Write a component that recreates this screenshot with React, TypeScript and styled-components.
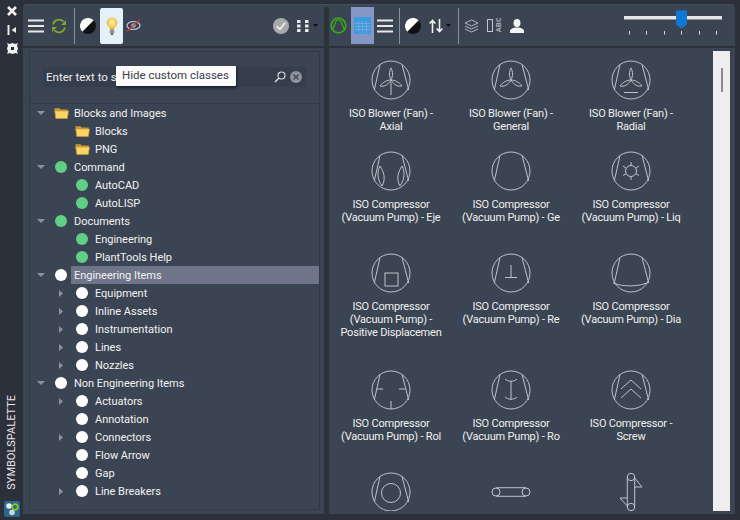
import React from 'react';
import styled, { createGlobalStyle } from 'styled-components';

const Global = createGlobalStyle`
  html, body { margin: 0; padding: 0; background: #2b303a; }
  body { font-family: Roboto, "Open Sans", sans-serif; font-size: 11px; color: #f0f0f0; }
  * { box-sizing: border-box; }
`;

const Page = styled.div`
  width: 740px; height: 520px; display: flex; background: #2b303a; overflow: hidden; position: relative;
`;
const Strip = styled.div`
  width: 23px; height: 100%; flex: none; display: flex; flex-direction: column; align-items: center; padding: 5px 0 3px 1px;
`;
const StripIcons = styled.div`
  display: flex; flex-direction: column; align-items: center; gap: 7px;
`;
const StripTitle = styled.div`
  margin-top: auto; margin-bottom: 11px; writing-mode: vertical-rl; transform: rotate(180deg);
  font-size: 11px; line-height: 14px; color: #e8e8e8;
`;
const Main = styled.div`
  flex: 1; margin: 4px 5px 6px 0; display: flex; background: #3b4452; border-radius: 4px 4px 0 0;
  border-top: 1px solid #454e5d; min-width: 0; overflow: hidden;
`;
const LeftPane = styled.div`
  width: 301px; flex: none; display: flex; flex-direction: column;
`;
const Splitter = styled.div`
  width: 5px; flex: none; background: #2d3138; margin-top: 2px;
`;
const RightPane = styled.div`
  flex: 1; min-width: 0; display: flex; flex-direction: column;
`;
const Toolbar = styled.div`
  height: 43px; flex: none; display: flex; align-items: center; position: relative; border-bottom: 2px solid #2d3138;
`;
const Tool = styled.div<{ $w?: number; $l?: number }>`
  width: ${p => p.$w ?? 16}px; height: 100%; margin-left: ${p => p.$l ?? 0}px; flex: none;
  display: flex; align-items: center; justify-content: center;
`;
const ToolActive = styled.div`
  width: 23px; height: 36px; margin-left: 4px; flex: none; background: #e4f1fb; border-radius: 2px;
  display: flex; align-items: center; justify-content: center;
`;
const ToolSelected = styled.div`
  width: 23px; height: 37px; margin-left: 4px; margin-top: 2px; flex: none; align-self: flex-start; background: #8595c4;
  display: flex; align-items: center; justify-content: center;
`;
const Sep = styled.div<{ $l?: number }>`
  width: 1px; height: 36px; margin-left: ${p => p.$l ?? 0}px; background: #8a919c; flex: none;
`;
const Spacer = styled.div`flex: 1;`;

const TreePanel = styled.div`
  flex: 1; margin: 3px 4px 4px 6px; border: 1px solid #333a47; display: flex; flex-direction: column; min-height: 0; overflow: hidden;
`;
const SearchArea = styled.div`
  height: 52px; flex: none; border-bottom: 1px solid #333a47; padding: 15px 13px 0 13px;
`;
const SearchBox = styled.div`
  height: 20px; background: #353e4c; display: flex; align-items: center; padding: 0 4px 0 3px; gap: 4px;
  color: #f0f0f0; font-size: 11.5px;
`;
const SearchText = styled.span`flex: 1;`;
const Tree = styled.div`display: flex; flex-direction: column;`;
const Row = styled.div`
  height: 18px; display: flex; align-items: center; flex: none; position: relative;
`;
const Indent = styled.div<{ $level: number }>`
  width: ${p => (p.$level ? 26 : 6)}px; flex: none;
`;
const Arrow = styled.div<{ $level: number }>`
  width: 10px; height: 10px; margin-right: ${p => (p.$level ? 8 : 7)}px; flex: none; display: flex; align-items: center; justify-content: center;
`;
const NodeIcon = styled.div`
  width: 16px; height: 18px; flex: none; display: flex; align-items: center; justify-content: center; margin-right: 5px;
`;
const Dot = styled.div<{ $green?: boolean }>`
  width: 12px; height: 12px; border-radius: 50%; background: ${p => (p.$green ? '#5fd085' : '#ffffff')};
`;
const Label = styled.div<{ $sel?: boolean }>`
  flex: ${p => (p.$sel ? 1 : 'none')}; height: 18px; line-height: 20px; white-space: nowrap; color: #f2f2f2;
  letter-spacing: -0.03px;
  background: ${p => (p.$sel ? '#6f7489' : 'transparent')}; margin-left: -3px; padding-left: 3px;
`;
const Tooltip = styled.div`
  position: absolute; left: 116px; top: 66px; width: 120px; height: 20px; background: #fbfbfb; color: #3a3f47;
  font-size: 11.5px; line-height: 19px; padding-left: 6px; box-shadow: 1px 2px 3px rgba(0,0,0,.55); border-radius: 1px; white-space: nowrap;
`;

const Content = styled.div`
  flex: 1; min-height: 0; display: flex; overflow: hidden; padding: 3px 5px 3px 0;
`;
const Grid = styled.div`
  flex: 1; min-width: 0; display: grid; grid-template-columns: repeat(3, 120px); grid-template-rows: 91px 102px 117px 102px 60px;
  padding-left: 2px; align-content: start; overflow: hidden; padding-top: 9px;
`;
const Cell = styled.div`
  display: flex; flex-direction: column; align-items: center; min-width: 0;
`;
const Caption = styled.div`
  margin-top: 7px; width: 116px; text-align: center; color: #f0f0f0; line-height: 13px; font-size: 11px; letter-spacing: -0.2px;
`;
const Line = styled.div`white-space: nowrap;`;
const Scroll = styled.div`
  width: 17px; flex: none; background: #eeeeee; display: flex; justify-content: center; padding-top: 17px;
`;
const Thumb = styled.div`
  width: 2px; height: 24px; background: #8a8a8a;
`;
const SliderWrap = styled.div`
  width: 100px; height: 30px; margin-right: 11px; margin-top: -2px; flex: none; position: relative;
`;

const ST = '#bfc3ca';

const Hamburger = () => (
  <svg width="16" height="14" viewBox="0 0 16 14"><path d="M0 1.500h16M0 7h16M0 12.500h16" stroke="#e8e8e8" strokeWidth="2" /></svg>
);
const Contrast = () => (
  <svg width="16" height="16" viewBox="0 0 16 16">
    <circle cx="8" cy="8" r="8" fill="#101215" />
    <path d="M2.300 13.700A8 8 0 0 1 13.700 2.300Z" fill="#fff" />
  </svg>
);
const Sync = () => (
  <svg width="16" height="16" viewBox="0 0 16 16" fill="none">
    <path d="M2 6.500A6.300 6.300 0 0 1 12.500 3.500" stroke="#7aa72e" strokeWidth="1.800" />
    <path d="M14 9.500A6.300 6.300 0 0 1 3.500 12.500" stroke="#7aa72e" strokeWidth="1.800" />
    <path d="M15 2v5h-5zM1 14V9h5z" fill="#7aa72e" />
  </svg>
);
const Bulb = () => (
  <svg width="12" height="18" viewBox="0 0 12 18">
    <defs><radialGradient id="bg" cx=".5" cy=".4" r=".6"><stop offset="0" stopColor="#fff6b0" /><stop offset="1" stopColor="#f0b020" /></radialGradient></defs>
    <path d="M6 .5a5.300 5.300 0 0 0-3 9.700c.7.6.8 1.300.8 2.300h4.400c0-1 .1-1.700.8-2.300A5.300 5.300 0 0 0 6 .5Z" fill="url(#bg)" />
    <rect x="3.800" y="12.500" width="4.400" height="4" fill="#8c8c88" />
    <rect x="4.800" y="16.500" width="2.400" height="1.500" fill="#5e5e5c" />
  </svg>
);
const EyeOff = () => (
  <svg width="15" height="13" viewBox="0 0 15 13" fill="none">
    <ellipse cx="7.500" cy="6.500" rx="6.500" ry="4" stroke="#c5ccd8" strokeWidth="1.200" />
    <circle cx="7.500" cy="6.500" r="2.300" fill="#a6b1c4" />
    <path d="M1 12.500 14 .5" stroke="#d0342c" strokeWidth="1.200" />
  </svg>
);
const CheckCircle = () => (
  <svg width="16" height="16" viewBox="0 0 16 16" fill="none">
    <circle cx="8" cy="8" r="8" fill="#a9a9a9" />
    <path d="M3.800 8.300 7 11.300 12.200 4.800" stroke="#eee" strokeWidth="1.800" />
  </svg>
);
const Dots = () => (
  <svg width="12" height="12" viewBox="0 0 12 12" fill="#eaeaea">
    {[0, 4.500, 9].map(y => [0, 8].map(x => <rect key={`${x}-${y}`} x={x} y={y} width="3.500" height="3" />))}
  </svg>
);
const Caret = () => (
  <svg width="5" height="3" viewBox="0 0 5 3"><path d="M0 0h5L2.500 3z" fill="#0e0f12" /></svg>
);
const GreenRing = () => (
  <svg width="17" height="17" viewBox="0 0 17 17" fill="none">
    <circle cx="8.500" cy="8.500" r="7.300" stroke="#3aa51c" strokeWidth="1.800" />
    <path d="M2.500 12.500 6.500 3.500C7.800 2.600 9.200 2.600 10.500 3.500L14.500 12.500" stroke="#3aa51c" strokeWidth="1.300" />
  </svg>
);
const TableIcon = () => (
  <svg width="17" height="17" viewBox="0 0 17 17">
    <rect width="17" height="17" fill="#3c9ade" />
    <path d="M1 6.500h15M1 9.500h15M1 12.500h15M4.700 4v12M8.500 4v12M12.300 4v12" stroke="#7daad8" strokeWidth=".8" />
  </svg>
);
const Sort = () => (
  <svg width="14" height="14" viewBox="0 0 14 14" fill="none" stroke="#f2f2f2" strokeWidth="1.600">
    <path d="M3.500 14V1.500M.6 4.500l2.900-3 2.900 3M10.500 0v12.500M7.600 9.500l2.900 3 2.900-3" />
  </svg>
);
const Layers = () => (
  <svg width="15" height="14" viewBox="0 0 15 14" fill="none" stroke="#aeb4bd" strokeWidth="1">
    <path d="M7.500 1 14 4 7.500 7 1 4ZM1 7l6.500 3L14 7M1 10l6.500 3L14 10" />
  </svg>
);
const Abc = () => (
  <svg width="15" height="15" viewBox="0 0 15 15" fill="none">
    <rect x=".5" y="1.500" width="5" height="12" stroke="#c3c7cd" strokeWidth="1" />
    <text transform="translate(14 14.500) rotate(-90)" fontFamily="Roboto, sans-serif" fontSize="8" fontWeight="700" fill="#a6acb5">ABC</text>
  </svg>
);
const User = () => (
  <svg width="14" height="14" viewBox="0 0 14 14" fill="#f4f4f4">
    <ellipse cx="7" cy="4" rx="3.500" ry="4" />
    <path d="M0 14v-2c0-2 3-3 5-3.500h4c2 .5 5 1.500 5 3.500v2z" />
  </svg>
);
const Folder = () => (
  <svg width="15" height="12" viewBox="0 0 15 12">
    <path d="M.5 1.200h5l1.200 1.300h7V5H.5z" fill="#c79a32" />
    <path d="M.8 4h13.700l-1.200 7.500H1.800z" fill="#fbd466" stroke="#c79a32" strokeWidth=".7" />
  </svg>
);
const DownArrow = () => (
  <svg width="8" height="4" viewBox="0 0 8 4"><path d="M0 0h8L4 4z" fill="#8d929b" /></svg>
);
const RightArrow = () => (
  <svg width="4" height="7" viewBox="0 0 4 7"><path d="M0 0l4 3.500L0 7z" fill="#8d929b" /></svg>
);

const Outline: React.FC<{ children?: React.ReactNode }> = ({ children }) => (
  <svg width="40" height="40" viewBox="-20 -20 40 40" fill="none" stroke={ST} strokeWidth="1">
    <circle r="19" />
    <path d="M-11-15.500-16.700 10M11-15.500 17.700 10" />
    {children}
  </svg>
);
const Blades = () => (
  <g>
    <path d="M0 0C-2-4-2-8 0-12 2-8 2-4 0 0Z" />
    <path d="M0 0C-4 0-8 2-11 6-7 7-3 5 0 0Z" />
    <path d="M0 0C4 0 8 2 11 6 7 7 3 5 0 0Z" />
  </g>
);

type Sym = { icon: React.ReactNode; lines: string[] };
const VP = '(Vacuum Pump) -';
const symbols: Sym[] = [
  { icon: <Outline><Blades /><path d="M0 2V15" /></Outline>, lines: ['ISO Blower (Fan) -', 'Axial'] },
  { icon: <Outline><Blades /></Outline>, lines: ['ISO Blower (Fan) -', 'General'] },
  { icon: <Outline><Blades /><path d="M-7 12.500H7" /></Outline>, lines: ['ISO Blower (Fan) -', 'Radial'] },
  { icon: <Outline><path d="M-11-5C-14 1-14 8-9 15-5 8-7 1-11-5ZM11-5C14 1 14 8 9 15 5 8 7 1 11-5Z" /></Outline>, lines: ['ISO Compressor', `${VP} Eje`] },
  { icon: <Outline />, lines: ['ISO Compressor', `${VP} Ge`] },
  { icon: <Outline><circle r="5.500" /><path d="M0-5.500V-9M4.800-2.800 8-5M4.800 2.800 8 4.500M0 5.500V9M-4.800 2.800-8 4.500M-4.800-2.800-8-5" /></Outline>, lines: ['ISO Compressor', `${VP} Liq`] },
  { icon: <Outline><rect x="-6" y="0" width="13" height="13" /></Outline>, lines: ['ISO Compressor', VP, 'Positive Displacemen'] },
  { icon: <Outline><path d="M0-8V4M-6 4.500H6" /></Outline>, lines: ['ISO Compressor', `${VP} Re`] },
  { icon: <Outline><path d="M-18 10C-8 14 8 14 18 9" /></Outline>, lines: ['ISO Compressor', `${VP} Dia`] },
  { icon: <Outline><path d="M-14-1H-8M14-1H8M0 11V19" /></Outline>, lines: ['ISO Compressor', `${VP} Rol`] },
  { icon: <Outline><path d="M-6-11C-3-8 3-8 6-11M-6 7C-3 10 3 10 6 7M0-9V9" /></Outline>, lines: ['ISO Compressor', `${VP} Ro`] },
  { icon: <Outline><path d="M-10-1 0-10 10-1M-10 8 0-1 10 8" /></Outline>, lines: ['ISO Compressor -', 'Screw'] },
  { icon: <Outline><circle cy="1" r="9.500" /></Outline>, lines: [] },
  {
    icon: (
      <svg width="40" height="40" viewBox="-20 -20 40 40" fill="none" stroke={ST} strokeWidth="1">
        <circle cx="-15" cy="0" r="4" /><circle cx="15" cy="0" r="4" />
        <path d="M-15-4.300H15M-15 4.300H15" />
      </svg>
    ),
    lines: [],
  },
  {
    icon: (
      <svg width="40" height="40" viewBox="-20 -20 40 40" fill="none" stroke={ST} strokeWidth="1">
        <circle cx="0" cy="-15" r="3.700" /><circle cx="0" cy="15" r="3.700" />
        <path d="M-3.700-15V15M3.700-15V15M3.700-14 11-5H3.700M-3.700 14-11 6H-3.700" />
      </svg>
    ),
    lines: [],
  },
];

type Node = { t: string; level: 0 | 1; exp?: 'down' | 'right'; icon: 'folder' | 'green' | 'white'; sel?: boolean };
const nodes: Node[] = [
  { t: 'Blocks and Images', level: 0, exp: 'down', icon: 'folder' },
  { t: 'Blocks', level: 1, icon: 'folder' },
  { t: 'PNG', level: 1, icon: 'folder' },
  { t: 'Command', level: 0, exp: 'down', icon: 'green' },
  { t: 'AutoCAD', level: 1, icon: 'green' },
  { t: 'AutoLISP', level: 1, icon: 'green' },
  { t: 'Documents', level: 0, exp: 'down', icon: 'green' },
  { t: 'Engineering', level: 1, icon: 'green' },
  { t: 'PlantTools Help', level: 1, icon: 'green' },
  { t: 'Engineering Items', level: 0, exp: 'down', icon: 'white', sel: true },
  { t: 'Equipment', level: 1, exp: 'right', icon: 'white' },
  { t: 'Inline Assets', level: 1, exp: 'right', icon: 'white' },
  { t: 'Instrumentation', level: 1, exp: 'right', icon: 'white' },
  { t: 'Lines', level: 1, exp: 'right', icon: 'white' },
  { t: 'Nozzles', level: 1, exp: 'right', icon: 'white' },
  { t: 'Non Engineering Items', level: 0, exp: 'down', icon: 'white' },
  { t: 'Actuators', level: 1, exp: 'right', icon: 'white' },
  { t: 'Annotation', level: 1, icon: 'white' },
  { t: 'Connectors', level: 1, exp: 'right', icon: 'white' },
  { t: 'Flow Arrow', level: 1, icon: 'white' },
  { t: 'Gap', level: 1, icon: 'white' },
  { t: 'Line Breakers', level: 1, exp: 'right', icon: 'white' },
];

const ticks = [5, 22, 40, 57, 75, 92];

export default function App() {
  return (
    <Page>
      <Global />
      <Strip>
        <StripIcons>
          <svg width="12" height="12" viewBox="0 0 12 12"><path d="M2 2l8 8M10 2l-8 8" stroke="#f0f0f0" strokeWidth="2.600" /></svg>
          <svg width="10" height="12" viewBox="0 0 10 12"><path d="M1.500 1v10" stroke="#e8e8e8" strokeWidth="2" /><path d="M9 3v6L4.500 6z" fill="#e8e8e8" /></svg>
          <svg width="11" height="11" viewBox="0 0 11 11">
            <path d="M0 0l2.500 1L5.500 0l3 1L11 0l-1 2.500L11 5.500l-1 3L11 11l-2.500-1-3 1-3-1L0 11l1-2.500L0 5.500l1-3z" fill="#f0f0f0" />
            <rect x="4" y="4" width="3" height="3" fill="#2b303a" />
          </svg>
        </StripIcons>
        <StripTitle>SYMBOLSPALETTE</StripTitle>
        <svg width="16" height="16" viewBox="0 0 16 16">
          <rect width="16" height="16" rx="2" fill="#28688f" />
          <circle cx="5" cy="5" r="2.800" fill="#e8eef2" />
          <circle cx="11" cy="6" r="2.800" fill="none" stroke="#8fc31f" strokeWidth="1.800" />
          <circle cx="8" cy="11.500" r="2.800" fill="#c9d6de" />
        </svg>
      </Strip>
      <Main>
        <LeftPane>
          <Toolbar>
            <Tool $w={16} $l={5}><Hamburger /></Tool>
            <Tool $w={16} $l={7}><Sync /></Tool>
            <Sep $l={7} />
            <Tool $w={16} $l={5}><Contrast /></Tool>
            <ToolActive><Bulb /></ToolActive>
            <Tool $w={15} $l={3}><EyeOff /></Tool>
            <Spacer />
            <Tool $w={16}><CheckCircle /></Tool>
            <Tool $w={12} $l={8}><Dots /></Tool>
            <Tool $w={5} $l={4}><Caret /></Tool>
            <Tool $w={6} />
          </Toolbar>
          <TreePanel>
            <SearchArea>
              <SearchBox>
                <SearchText>Enter text to search</SearchText>
                <svg width="12" height="12" viewBox="0 0 12 12" fill="none" stroke="#d5d8dc" strokeWidth="1.200">
                  <circle cx="7.500" cy="4.500" r="3.500" /><path d="M5 7 1 11" strokeWidth="1.600" />
                </svg>
                <svg width="12" height="12" viewBox="0 0 12 12">
                  <circle cx="6" cy="6" r="6" fill="#8f949c" /><path d="M3.500 3.500l5 5M8.500 3.500l-5 5" stroke="#3b4452" strokeWidth="1.300" />
                </svg>
              </SearchBox>
            </SearchArea>
            <Tree>
              {nodes.map(n => (
                <Row key={n.t}>
                  <Indent $level={n.level} />
                  <Arrow $level={n.level}>{n.exp === 'down' ? <DownArrow /> : n.exp === 'right' ? <RightArrow /> : null}</Arrow>
                  <NodeIcon>
                    {n.icon === 'folder' ? <Folder /> : <Dot $green={n.icon === 'green'} />}
                  </NodeIcon>
                  <Label $sel={n.sel}>{n.t}</Label>
                </Row>
              ))}
            </Tree>
          </TreePanel>
        </LeftPane>
        <Splitter />
        <RightPane>
          <Toolbar>
            <Tool $w={17} $l={1}><GreenRing /></Tool>
            <ToolSelected><TableIcon /></ToolSelected>
            <Tool $w={16} $l={3}><Hamburger /></Tool>
            <Sep $l={6} />
            <Tool $w={16} $l={5}><Contrast /></Tool>
            <Tool $w={14} $l={8}><Sort /></Tool>
            <Tool $w={5} $l={3}><Caret /></Tool>
            <Sep $l={7} />
            <Tool $w={15} $l={5}><Layers /></Tool>
            <Tool $w={15} $l={8}><Abc /></Tool>
            <Tool $w={14} $l={8}><User /></Tool>
            <Spacer />
            <SliderWrap>
              <svg width="100" height="30" viewBox="0 0 100 30">
                <rect x="0" y="6" width="98" height="3.500" fill="#e6e6e6" />
                <path d="M52 .5h11v14l-5.500 4-5.500-4z" fill="#0f78d4" />
                {ticks.map(x => <rect key={x} x={x} y="21" width="1" height="3.500" fill="#d8d8d8" />)}
              </svg>
            </SliderWrap>
          </Toolbar>
          <Content>
            <Grid>
              {symbols.map((s, i) => (
                <Cell key={i}>
                  {s.icon}
                  <Caption>{s.lines.map(l => <Line key={l}>{l}</Line>)}</Caption>
                </Cell>
              ))}
            </Grid>
            <Scroll><Thumb /></Scroll>
          </Content>
        </RightPane>
      </Main>
      <Tooltip>Hide custom classes</Tooltip>
    </Page>
  );
}
